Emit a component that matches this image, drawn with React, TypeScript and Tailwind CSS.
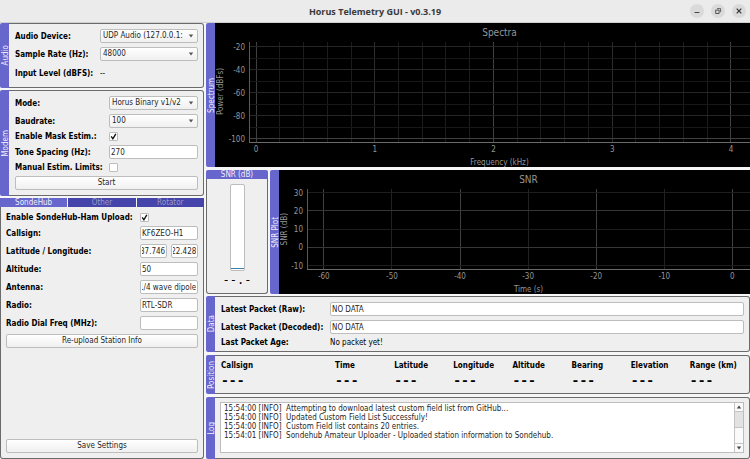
import type { ReactNode } from 'react';

const FIELD =
  'h-[14px] w-full min-w-0 rounded-[2px] border border-[#bdbdbd] bg-white px-px text-[#1f1f1f] outline-none';
const BUTTON =
  'h-[14px] w-full rounded-[2px] border border-[#bdbdbd] bg-linear-to-b from-white to-[#f0f0f0] text-center leading-[12px] text-[#1f1f1f]';

function SideTab({ title }: { title: string }) {
  return (
    <h2 className="flex w-[9px] shrink-0 items-center justify-center rounded-l-[2px] bg-[#6666cc] pl-[2px] text-[#f0f0fa]">
      <span className="rotate-180 leading-[9px] whitespace-nowrap [writing-mode:vertical-rl]">{title}</span>
    </h2>
  );
}

function Dock({ title, className = '', children }: { title: string; className?: string; children: ReactNode }) {
  return (
    <section className={`flex ${className}`}>
      <SideTab title={title} />
      <div className="min-w-0 flex-1 rounded-r-[3px] border border-l-0 border-[#6b6b6b] bg-[#efefef]">{children}</div>
    </section>
  );
}

function Combo({ id, options }: { id: string; options: string[] }) {
  return (
    <div className="relative min-w-0">
      <select
        id={id}
        className="block h-[14px] w-full appearance-none overflow-hidden rounded-[2px] border border-[#bdbdbd] bg-linear-to-b from-white to-[#f0f0f0] pr-[14px] pl-[2px] leading-[12px] text-[#1f1f1f] outline-none"
      >
        {options.map((o) => (
          <option key={o}>{o}</option>
        ))}
      </select>
      <svg className="pointer-events-none absolute top-[5px] right-[4px] h-[4px] w-[6px]" viewBox="0 0 6 4">
        <path d="M0.8 0.5h4.4L3 3.4z" fill="#555" />
      </svg>
    </div>
  );
}

function Tick({ id, checked = false }: { id: string; checked?: boolean }) {
  return (
    <span className="relative block h-[9px] w-[9px]">
      <input
        id={id}
        type="checkbox"
        defaultChecked={checked}
        className="peer block h-[9px] w-[9px] appearance-none rounded-[1px] border border-[#bdbdbd] bg-white"
      />
      <svg
        className="pointer-events-none absolute top-0 left-0 hidden h-[9px] w-[9px] peer-checked:block"
        viewBox="0 0 9 9"
      >
        <path d="M2.2 4.4L3.9 6.8L6.8 1.9" fill="none" stroke="#111" strokeWidth="1.4" />
      </svg>
    </span>
  );
}

function Label({ id, children }: { id?: string; children: ReactNode }) {
  return (
    <label htmlFor={id} className="font-bold whitespace-nowrap">
      {children}
    </label>
  );
}

function showEnd(el: HTMLInputElement | null) {
  if (el) el.scrollLeft = el.scrollWidth;
}

type GridLine = { at: number; color: string; label?: string };

function Plot({
  title,
  xTitle,
  yTitle,
  xs,
  ys,
  inset,
  indent,
}: {
  title: string;
  xTitle: string;
  yTitle: string;
  xs: GridLine[];
  ys: GridLine[];
  inset: string;
  indent: string;
}) {
  return (
    <figure className="flex min-w-0 flex-1 flex-col bg-black text-[#969696]">
      <figcaption className={`h-[19px] text-center text-[10px] leading-[20px] ${indent}`}>{title}</figcaption>
      <div className="flex min-h-0 flex-1">
        <div className={`flex shrink-0 justify-start ${inset}`}>
          <span className="rotate-180 self-center text-center leading-[11px] whitespace-nowrap [writing-mode:vertical-rl]">
            {yTitle}
          </span>
        </div>
        <svg className="h-full min-w-0 flex-1 overflow-visible" shapeRendering="crispEdges">
          {xs.map((l) => (
            <line key={l.at} x1={`${l.at}%`} x2={`${l.at}%`} y1="0" y2="100%" stroke={l.color} />
          ))}
          {ys.map((l) => (
            <line key={l.at} x1="0" x2="100%" y1={`${l.at}%`} y2={`${l.at}%`} stroke={l.color} />
          ))}
          <line x1="0" x2="0" y1="0" y2="100%" stroke="#5a5a5a" />
          <line x1="0" x2="100%" y1="100%" y2="100%" stroke="#6a6a6a" />
          {xs.map(
            (l) =>
              l.label && (
                <text key={l.at} x={`${l.at}%`} y="100%" dy="10" textAnchor="middle" fill="#969696">
                  {l.label}
                </text>
              ),
          )}
          {ys.map(
            (l) =>
              l.label && (
                <text key={l.at} x="-4" y={`${l.at}%`} dy="3" textAnchor="end" fill="#969696">
                  {l.label}
                </text>
              ),
          )}
        </svg>
      </div>
      <div className={`h-[25px] pt-[15px] text-center leading-[11px] ${indent}`}>{xTitle}</div>
    </figure>
  );
}

const MINOR = '#1c1c1c';

const spectrumXs: GridLine[] = Array.from({ length: 21 }, (_, i) => {
  const major = i % 5 === 0;
  return {
    at: 1.4 + i * 4.74,
    color: major ? (i % 10 === 0 ? '#404040' : '#2c2c2c') : MINOR,
    label: major ? String(i / 5) : undefined,
  };
});

const spectrumYs: GridLine[] = Array.from({ length: 9 }, (_, i) => ({
  at: 4.7 + i * 11.5,
  color: i === 8 ? '#404040' : i % 2 === 0 ? '#262626' : '#171717',
  label: i % 2 === 0 ? String(-20 - i * 10) : undefined,
}));

const snrXs: GridLine[] = Array.from({ length: 7 }, (_, i) => ({
  at: 3.8 + i * 15.37,
  color: i % 2 === 0 ? '#404040' : '#222222',
  label: String(-60 + i * 10),
}));

const snrYs: GridLine[] = Array.from({ length: 5 }, (_, i) => ({
  at: 4.4 + i * 22.9,
  color: i % 2 === 1 ? '#363636' : '#1e1e1e',
  label: String(30 - i * 10),
}));

const position = ['Callsign', 'Time', 'Latitude', 'Longitude', 'Altitude', 'Bearing', 'Elevation', 'Range (km)'];

const log = [
  '15:54:00 [INFO]  Attempting to download latest custom field list from GitHub...',
  '15:54:00 [INFO]  Updated Custom Field List Successfuly!',
  '15:54:00 [INFO]  Custom Field list contains 20 entries.',
  '15:54:01 [INFO]  Sondehub Amateur Uploader - Uploaded station information to Sondehub.',
].join('\n');

const WINDOW_BUTTON = 'flex h-[14px] w-[14px] items-center justify-center rounded-full bg-[#dadada]';

function TitleBar() {
  return (
    <header className="grid h-[23px] grid-cols-[1fr_auto_1fr] items-center border-b border-[#cfcfcf] bg-[#ebebeb] pr-1 pl-1">
      <h1 className="col-start-2 font-['Open_Sans',sans-serif] text-[9px] font-bold text-[#3a3a3a]">
        Horus Telemetry GUI - v0.3.19
      </h1>
      <div className="flex justify-end gap-[7px]">
        <button aria-label="Minimize" className={WINDOW_BUTTON}>
          <svg viewBox="0 0 14 14" className="h-[14px] w-[14px]">
            <path d="M4.6 8.5h4.8" stroke="#444" />
          </svg>
        </button>
        <button aria-label="Restore" className={WINDOW_BUTTON}>
          <svg viewBox="0 0 14 14" className="h-[14px] w-[14px]" fill="none" stroke="#444" strokeWidth="0.9">
            <path d="M4.7 6.1h3.4v3.4H4.7z" />
            <path d="M6 4.6h3.6v3.6" strokeWidth="0.8" />
          </svg>
        </button>
        <button aria-label="Close" className={WINDOW_BUTTON}>
          <svg viewBox="0 0 14 14" className="h-[14px] w-[14px]">
            <path d="M4.7 4.7l4.6 4.6M9.3 4.7l-4.6 4.6" stroke="#333" strokeWidth="1.2" />
          </svg>
        </button>
      </div>
    </header>
  );
}

function Sidebar() {
  return (
    <aside className="flex w-[204px] shrink-0 flex-col">
      <Dock title="Audio" className="mb-[2px]">
        <div className="grid grid-cols-[81px_1fr] items-center gap-1 pt-[5px] pr-[5px] pb-[5px] pl-[6px]">
          <Label id="device">Audio Device:</Label>
          <Combo id="device" options={['UDP Audio (127.0.0.1:7355)']} />
          <Label id="rate">Sample Rate (Hz):</Label>
          <Combo id="rate" options={['48000']} />
          <span className="font-bold whitespace-nowrap">Input Level (dBFS):</span>
          <output className="h-[17px] leading-[17px]">--</output>
        </div>
      </Dock>

      <Dock title="Modem" className="mb-[2px]">
        <div className="grid grid-cols-[90px_1fr] items-center gap-1 pt-[5px] pr-[5px] pb-[5px] pl-[6px]">
          <Label id="mode">Mode:</Label>
          <Combo id="mode" options={['Horus Binary v1/v2']} />
          <Label id="baud">Baudrate:</Label>
          <Combo id="baud" options={['100']} />
          <Label id="mask">Enable Mask Estim.:</Label>
          <Tick id="mask" checked />
          <Label id="tone">Tone Spacing (Hz):</Label>
          <input id="tone" className={FIELD} defaultValue="270" />
          <Label id="limits">Manual Estim. Limits:</Label>
          <Tick id="limits" />
          <div className="col-span-2">
            <button className={`block ${BUTTON}`}>Start</button>
          </div>
        </div>
      </Dock>

      <div role="tablist" className="grid grid-cols-3 gap-px leading-[9px]">
        <button role="tab" aria-selected="true" className="h-[9px] bg-[#6666cc] text-[#f0f0fa]">
          SondeHub
        </button>
        <button role="tab" aria-selected="false" className="h-[9px] bg-[#4444aa] text-[#9a9ac4]">
          Other
        </button>
        <button role="tab" aria-selected="false" className="h-[9px] bg-[#4444aa] text-[#9a9ac4]">
          Rotator
        </button>
      </div>
      <div
        role="tabpanel"
        className="flex flex-1 flex-col justify-between rounded-b-[3px] border border-t-0 border-[#6b6b6b] bg-[#efefef] px-[5px] pt-[6px] pb-[5px]"
      >
        <div className="grid grid-cols-[130px_1fr] items-center gap-1">
          <Label id="upload">Enable SondeHub-Ham Upload:</Label>
          <Tick id="upload" checked />
          <Label id="callsign">Callsign:</Label>
          <input id="callsign" className={FIELD} defaultValue="KF6ZEO-H1" />
          <Label id="lat">Latitude / Longitude:</Label>
          <div className="grid grid-cols-2 gap-1">
            <input id="lat" ref={showEnd} className={FIELD} defaultValue="37.746" />
            <input aria-label="Longitude" ref={showEnd} className={FIELD} defaultValue="-122.428" />
          </div>
          <Label id="alt">Altitude:</Label>
          <input id="alt" className={FIELD} defaultValue="50" />
          <Label id="antenna">Antenna:</Label>
          <input id="antenna" ref={showEnd} className={FIELD} defaultValue="1/4 wave dipole" />
          <Label id="radio">Radio:</Label>
          <input id="radio" className={FIELD} defaultValue="RTL-SDR" />
          <Label id="freq">Radio Dial Freq (MHz):</Label>
          <input id="freq" className={FIELD} />
          <div className="col-span-2">
            <button className={`block ${BUTTON}`}>Re-upload Station Info</button>
          </div>
        </div>
        <button className={BUTTON}>Save Settings</button>
      </div>
    </aside>
  );
}

function SnrMeter() {
  return (
    <section className="flex w-[62px] shrink-0 flex-col">
      <h2 className="h-[9px] rounded-t-[2px] bg-[#6666cc] text-center leading-[9px] text-[#f0f0fa]">SNR (dB)</h2>
      <div className="flex flex-1 flex-col items-center rounded-b-[3px] border border-t-0 border-[#6b6b6b] bg-[#efefef] pt-[5px]">
        <div
          role="meter"
          aria-label="SNR"
          className="flex h-[87px] w-[15px] flex-col justify-end rounded-[2px] border border-[#bdbdbd] bg-white"
        >
          <div className="mb-px h-px bg-[#3f7fae]" />
        </div>
        <output className="pt-[2px] font-['DejaVu_Sans_Mono',monospace] text-[12px] leading-[14px] text-black">
          --.-
        </output>
      </div>
    </section>
  );
}

export default function App() {
  return (
    <div className="flex min-h-screen flex-col bg-[#f6f6f6] font-['DejaVu_Sans_Condensed','DejaVu_Sans',sans-serif] text-[8px] leading-[9px] text-black">
      <TitleBar />
      <div className="flex flex-1 gap-[2px]">
        <Sidebar />
        <main className="flex min-w-0 flex-1 flex-col">
          <section className="mb-[3px] flex h-36">
            <SideTab title="Spectrum" />
            <Plot
              title="Spectra"
              xTitle="Frequency (kHz)"
              yTitle="Power (dBFs)"
              xs={spectrumXs}
              ys={spectrumYs}
              inset="w-[34px]"
              indent="pl-[34px]"
            />
          </section>

          <div className="mb-[2px] flex h-[124px] gap-[2px]">
            <SnrMeter />
            <section className="flex min-w-0 flex-1">
              <SideTab title="SNR Plot" />
              <Plot
                title="SNR"
                xTitle="Time (s)"
                yTitle="SNR (dB)"
                xs={snrXs}
                ys={snrYs}
                inset="w-[28px]"
                indent="pl-[28px]"
              />
            </section>
          </div>

          <Dock title="Data" className="mb-[3px]">
            <div className="grid grid-cols-[105px_1fr] items-center gap-1 pt-[5px] pr-[5px] pb-1 pl-[6px]">
              <Label id="raw">Latest Packet (Raw):</Label>
              <input id="raw" readOnly className={FIELD} defaultValue="NO DATA" />
              <Label id="decoded">Latest Packet (Decoded):</Label>
              <input id="decoded" readOnly className={FIELD} defaultValue="NO DATA" />
              <span className="font-bold whitespace-nowrap">Last Packet Age:</span>
              <output>No packet yet!</output>
            </div>
          </Dock>

          <Dock title="Position" className="mb-[3px]">
            <table className="w-full table-fixed text-left">
              <thead>
                <tr>
                  {position.map((name, i) => (
                    <th key={name} className={`pt-[5px] font-bold whitespace-nowrap ${i === 0 ? 'w-[120px] pl-[6px]' : ''}`}>
                      {name}
                    </th>
                  ))}
                </tr>
              </thead>
              <tbody>
                <tr>
                  {position.map((name, i) => (
                    <td
                      key={name}
                      className={`pt-1 pb-[5px] font-['DejaVu_Sans_Mono',monospace] text-[13px] leading-[14px] font-bold ${i === 0 ? 'pl-[6px]' : ''}`}
                    >
                      ---
                    </td>
                  ))}
                </tr>
              </tbody>
            </table>
          </Dock>

          <Dock title="Log" className="flex-1">
            <div className="flex h-full pt-1 pr-[5px] pb-[5px] pl-[5px]">
              <div className="flex flex-1 border border-[#bdbdbd] bg-white">
                <textarea
                  aria-label="Log"
                  readOnly
                  className="block min-w-0 flex-1 resize-none overflow-hidden px-[3px] pt-px leading-[9px] text-[#1f1f1f] outline-none"
                  defaultValue={log}
                />
                <div className="flex w-[9px] flex-col border-l border-[#c4c4c4] bg-[#fafafa]">
                  <button aria-label="Scroll up" className="flex h-[9px] items-center justify-center border-b border-[#c4c4c4]">
                    <svg viewBox="0 0 6 4" className="h-[4px] w-[6px]">
                      <path d="M0.8 3.5h4.4L3 0.6z" fill="#444" />
                    </svg>
                  </button>
                  <div className="flex-1">
                    <div className="h-4 border-b border-[#c4c4c4] bg-[#e2e2e2]" />
                  </div>
                  <button aria-label="Scroll down" className="flex h-[9px] items-center justify-center border-t border-[#c4c4c4]">
                    <svg viewBox="0 0 6 4" className="h-[4px] w-[6px]">
                      <path d="M0.8 0.5h4.4L3 3.4z" fill="#444" />
                    </svg>
                  </button>
                </div>
              </div>
            </div>
          </Dock>
        </main>
      </div>
    </div>
  );
}
